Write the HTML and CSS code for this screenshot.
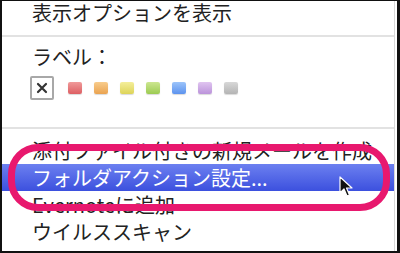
FILE: index.html
```html
<!DOCTYPE html>
<html lang="ja">
<head>
<meta charset="utf-8">
<link rel="stylesheet" href="styles.css">
</head>
<body>
<div class="frame">
  <div class="menu">
    <div class="item first">表示オプションを表示</div>
    <div class="sep"></div>
    <div class="item label-head">ラベル：</div>
    <div class="swatches">
      <span class="xbox"><svg width="12" height="12" viewBox="0 0 12 12"><path d="M2 2 L10 10 M10 2 L2 10" stroke="#333" stroke-width="2.2" stroke-linecap="round"/></svg></span>
      <span class="sw red"></span>
      <span class="sw orange"></span>
      <span class="sw yellow"></span>
      <span class="sw green"></span>
      <span class="sw blue"></span>
      <span class="sw purple"></span>
      <span class="sw gray"></span>
    </div>
    <div class="sep sep2"></div>
    <div class="item">添付ファイル付きの新規メールを作成</div>
    <div class="item selected">フォルダアクション設定...</div>
    <div class="item">Evernoteに追加</div>
    <div class="item">ウイルススキャン</div>
  </div>
  <div class="highlight-ring"></div>
  <svg class="cursor" width="14" height="22" viewBox="0 0 14 22">
    <path d="M1 1 L1 17 L5 13 L8 20 L10.5 19 L7.5 12 L13 12 Z" fill="#111" stroke="#fff" stroke-width="1.2" stroke-linejoin="round"/>
  </svg>
</div>
</body>
</html>
```

FILE: styles.css
```css
html, body {
  margin: 0;
  padding: 0;
  background: #fff;
}
.frame {
  position: relative;
  width: 400px;
  height: 253px;
  box-sizing: border-box;
  border-style: solid;
  border-color: #111;
  border-width: 1px 3px 2px 2px;
  overflow: hidden;
  background: #fff;
}
.menu {
  height: 100%;
  box-sizing: border-box;
  border-right: 1px solid #d8d8d8;
  margin-right: 2px;
  font-family: "Noto Sans CJK JP", "Noto Sans", sans-serif;
  font-size: 20px;
  color: #222;
}
.item {
  height: 27px;
  line-height: 27px;
  padding-left: 30px;
  white-space: nowrap;
}
.item.first {
  height: 24px;
  line-height: 24px;
}
.sep {
  height: 2px;
  background: #e2e2e2;
  margin-top: 10px;
}
.label-head {
  height: 24px;
  line-height: 24px;
  margin-top: 8px;
}
.swatches {
  display: flex;
  align-items: center;
  margin-top: 7px;
  padding-left: 28px;
  height: 24px;
}
.xbox {
  box-sizing: border-box;
  width: 24px;
  height: 24px;
  border: 2px solid #a8a8a8;
  border-radius: 2px;
  display: flex;
  align-items: center;
  justify-content: center;
  margin-right: 14px;
}
.sw {
  width: 14px;
  height: 12px;
  border-radius: 2px;
  margin-right: 12px;
  box-shadow: 0 1px 1px rgba(0,0,0,0.15);
}
.red { background: linear-gradient(#f09a9a, #dd5f63); }
.orange { background: linear-gradient(#f8cc8c, #eaa350); }
.yellow { background: linear-gradient(#f4ee9a, #ddd458); }
.green { background: linear-gradient(#cce690, #9ccb52); }
.blue { background: linear-gradient(#9cc4fa, #5d93ee); }
.purple { background: linear-gradient(#e0c4f0, #bb93da); }
.gray { background: linear-gradient(#d8d8d8, #b4b4b4); }
.sep2 {
  margin-top: 27px;
  margin-bottom: 8px;
}
.selected {
  background: linear-gradient(#6c80f0, #3c50de);
  color: #fff;
}
.highlight-ring {
  position: absolute;
  left: 6px;
  top: 143px;
  width: 382px;
  height: 67px;
  box-sizing: border-box;
  border: 7px solid #e8186e;
  border-radius: 30px;
}
.cursor {
  position: absolute;
  left: 337px;
  top: 175px;
}
```
